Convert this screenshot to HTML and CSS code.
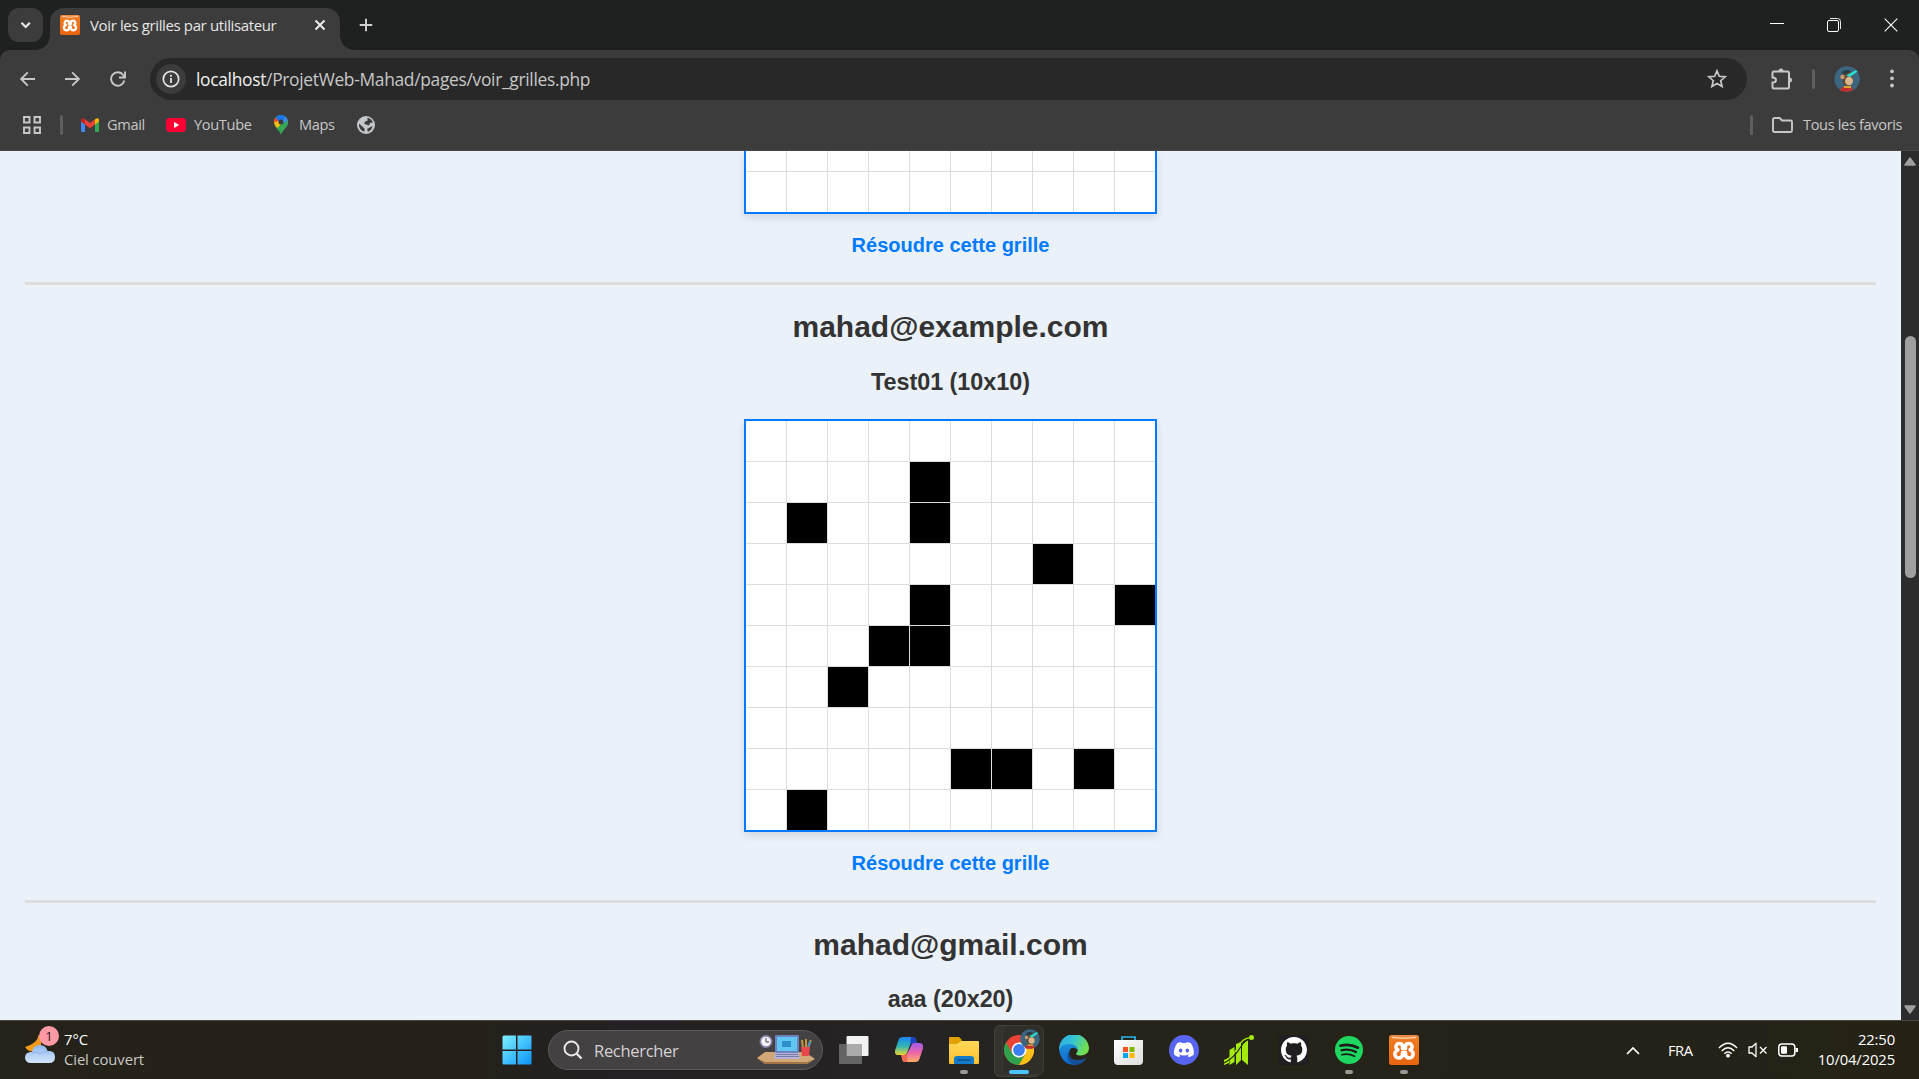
FILE: index.html
```html
<!DOCTYPE html>
<html lang="fr">
<head>
<meta charset="utf-8">
<title>Voir les grilles par utilisateur</title>
<link rel="stylesheet" href="styles.css">
</head>
<body>
<svg class="defs" width="0" height="0" aria-hidden="true">
  <defs>
    <linearGradient id="orange" x1="0" y1="0" x2="0" y2="1"><stop offset="0" stop-color="#e88d4c"/><stop offset=".18" stop-color="#f07a1e"/><stop offset="1" stop-color="#e8640f"/></linearGradient>
    <linearGradient id="win" x1="0" y1="0" x2="1" y2="1"><stop offset="0" stop-color="#7df0ff"/><stop offset="1" stop-color="#0a93fb"/></linearGradient>
    <symbol id="xampp" viewBox="0 0 30 30">
      <rect width="30" height="30" rx="2.5" fill="url(#orange)"/>
      <path d="M3 2.2Q15 4.5 27 2.2" stroke="#f8c9a4" stroke-width="1.5" fill="none"/>
      <path d="M13.500 13.500v-2q0-3-3-3a3.200 3.200 0 0 0-2.500 5.500l1 .8-1.500 1a4 4 0 0 0 2 7.200q4 0 4-4v-1.500h3V19q0 4 4 4a4 4 0 0 0 2-7.200l-1.500-1 1-.8a3.200 3.200 0 0 0-2.500-5.500q-3 0-3 3v2z" fill="none" stroke="#fff" stroke-width="3.500" stroke-linejoin="round"/>
    </symbol>
    <symbol id="avatar" viewBox="0 0 26 26">
      <circle cx="13" cy="13" r="12.700" fill="#3c6680"/>
      <path d="M6 25q1-5 7-5t6 4q-3 2-7 1.700T6 25" fill="#c1302f"/>
      <path d="M8 9q4-6 10-3l1 9-5 6-5-3z" fill="#5d4733"/>
      <circle cx="8.500" cy="11" r="2.200" fill="#c89c70"/>
      <ellipse cx="15" cy="15" rx="4" ry="4.300" fill="#dcb58c"/>
      <path d="M7 7q4-5 10-2l-5 3z" fill="#263c46"/>
      <path d="M12 9.500l10-5.500 1.500 1.500L16 11z" fill="#28e0d0"/>
      <path d="M10 20h7v2h-7z" fill="#dfa32f"/>
    </symbol>
  </defs>
</svg>
<div class="screen">
  <header class="browser">
    <div class="tabstrip">
      <div class="tab-search"><svg width="35" height="34" viewBox="0 0 35 34"><path d="M13.500 14.800l4.200 4.200 4.200-4.200" fill="none" stroke="#e6e6e6" stroke-width="2.200"/></svg></div>
      <div class="tab">
        <svg width="20" height="20"><use href="#xampp"/></svg>
        <span class="tab-title">Voir les grilles par utilisateur</span>
        <svg class="tab-close" width="12" height="12" viewBox="0 0 12 12"><path d="M1.500 1.500l9 9M10.500 1.500l-9 9" stroke="#ececec" stroke-width="2"/></svg>
      </div>
      <svg class="new-tab" width="14" height="14" viewBox="0 0 14 14"><path d="M7 .7v12.600M.7 7h12.600" stroke="#d0d0d0" stroke-width="1.900"/></svg>
      <div class="window-controls">
        <svg width="14" height="14" viewBox="0 0 14 14"><path d="M0 5.500h14" stroke="#fff"/></svg>
        <svg width="14" height="14" viewBox="0 0 14 14"><path d="M3 .5h7.500a3 3 0 0 1 3 3V11" fill="none" stroke="#e8e8e8"/><rect x=".5" y="2.500" width="11" height="11" rx="1.500" fill="none" stroke="#fff"/></svg>
        <svg width="14" height="14" viewBox="0 0 14 14"><path d="M.7.7l12.600 12.600M13.300.7L.7 13.300" stroke="#fff" stroke-width="1.100"/></svg>
      </div>
    </div>
    <div class="toolbar">
      <svg width="16" height="16" viewBox="0 0 16 16"><path d="M15 8H1.500M7.800 1.300L1.100 8l6.700 6.700" fill="none" stroke="#c7c7c7" stroke-width="1.900"/></svg>
      <svg width="16" height="16" viewBox="0 0 16 16"><path d="M0 8H13.500M7.200 1.300L13.900 8l-6.700 6.700" fill="none" stroke="#c7c7c7" stroke-width="1.900"/></svg>
      <svg width="16" height="16" viewBox="0 0 16 16"><path d="M14.300 9.500A6.700 6.700 0 1 1 13.200 4L14.800 6M15 .5v6H9" fill="none" stroke="#c7c7c7" stroke-width="1.900"/></svg>
      <div class="omnibox">
        <span class="site-info"><svg width="18" height="18" viewBox="0 0 18 18"><circle cx="9" cy="9" r="7.700" fill="none" stroke="#e3e3e3" stroke-width="1.700"/><path d="M9 8v5M9 4.800v1.900" stroke="#e3e3e3" stroke-width="1.800"/></svg></span>
        <span class="url"><b>localhost</b>/ProjetWeb-Mahad/pages/voir_grilles.php</span>
        <svg class="star" width="20" height="20" viewBox="0 0 20 20"><path d="M10 1.800l2.300 5.500 5.900.5-4.500 3.900 1.400 5.800-5.100-3.100-5.100 3.100 1.400-5.800-4.500-3.900 5.900-.5z" fill="none" stroke="#c7c7c7" stroke-width="1.700"/></svg>
      </div>
      <svg class="puzzle" width="22" height="22" viewBox="0 0 22 22"><path d="M3 3.500h13.500q1.500 0 1.500 1.500v14q0 1.500-1.500 1.500H3q-1.500 0-1.500-1.500v-4.500q3.500 0 3.500-2.500T1.500 9.500V5Q1.500 3.500 3 3.500z" fill="none" stroke="#c7c7c7" stroke-width="2"/><path d="M7.500 3a2.500 2.500 0 0 1 5 0zM18.500 9.500a2.500 2.500 0 0 1 0 5z" fill="#c7c7c7"/></svg>
      <i class="divider toolbar-divider"></i>
      <svg class="profile" width="26" height="26"><use href="#avatar"/></svg>
      <svg class="menu" width="4" height="20" viewBox="0 0 4 20"><g fill="#c7c7c7"><circle cx="2" cy="2.300" r="1.900"/><circle cx="2" cy="9.300" r="1.900"/><circle cx="2" cy="16.500" r="1.900"/></g></svg>
    </div>
    <div class="bookmarks">
      <svg width="18" height="18" viewBox="0 0 18 18"><path d="M1 1h5.500v5.500H1zM11.500 1H17v5.500h-5.500zM1 11.500h5.500V17H1zM11.500 11.500H17V17h-5.500z" fill="none" stroke="#c7c7c7" stroke-width="1.900"/></svg>
      <i class="divider apps-divider"></i>
      <svg class="bm-gmail" width="18" height="14" viewBox="0 0 18 14"><path d="M0 3l4 3v8H1.200Q0 14 0 12.800z" fill="#4285f4"/><path d="M18 3l-4 3v8h2.800q1.200 0 1.200-1.200z" fill="#34a853"/><path d="M14 1.300Q18-1.500 18 2.500v1L14 6.500z" fill="#fbbc04"/><path d="M4 1.300l5 3.800 5-3.800v5.200l-5 3.800-5-3.800z" fill="#ea4335"/><path d="M4 1.300Q0-1.500 0 2.500v1l4 3z" fill="#c5221f"/></svg>
      <span class="bm-label bm-label-gmail">Gmail</span>
      <svg class="bm-youtube" width="20" height="14" viewBox="0 0 20 14"><rect width="20" height="14" rx="3.500" fill="#ff0033"/><path d="M8 4l5.200 3L8 10z" fill="#fff"/></svg>
      <span class="bm-label bm-label-youtube">YouTube</span>
      <svg class="bm-maps" width="14" height="20" viewBox="0 0 14 20"><path d="M7 20C6.300 15.500 0 13 0 7a7 7 0 0 1 14 0c0 6-6.300 8.500-7 13z" fill="#34a853"/><path d="M3 12.500Q0 9.500 0 7q0-2.500 1.700-4.500L7 7z" fill="#fbbc04"/><path d="M1.700 2.500L5.500 5.800 3.500 9 .3 8.500Q-.5 5 1.700 2.500z" fill="#ea4335"/><path d="M1.700 2.500Q4-.5 7 0q3 0 4.800 2L6 8z" fill="#1a73e8"/><path d="M11.800 2Q14 4 14 7q0 1.500-.7 3L7 7z" fill="#4285f4"/><path d="M13.800 5q.8 4-2.800 7.500L7 17l-3-3.500z" fill="#34a853"/><path d="M.2 7q.5 3.500 3.300 6L7 9 4 6z" fill="#fbbc04"/><circle cx="7" cy="7" r="2.500" fill="#3c3c3c"/></svg>
      <span class="bm-label bm-label-maps">Maps</span>
      <svg class="bm-globe" width="18" height="18" viewBox="0 0 18 18"><circle cx="9" cy="9" r="9" fill="#c4c7cb"/><path d="M2 7.500l5.500 5v3.200A7.200 7.200 0 0 1 2 7.500zM10.500 1.800q4.300 1 5.500 5.200-1.500-1-3 0L12 9.500 9 8.500l-2-1 1.500-2.300 2-.5z" fill="#3c3c3c"/><path d="M10 13l5.500-3q-.5 4-4.500 5.800z" fill="#3c3c3c"/></svg>
      <i class="divider all-divider"></i>
      <svg class="folder" width="21" height="16" viewBox="0 0 21 16"><path d="M2.500 1h5.200l2.300 2.500h8.500Q20 3.500 20 5v8.500q0 1.500-1.500 1.500h-16Q1 15 1 13.500v-11Q1 1 2.500 1z" fill="none" stroke="#c7c7c7" stroke-width="1.900"/></svg>
      <span class="bm-label bm-label-all">Tous les favoris</span>
    </div>
  </header>

  <div class="viewport">
    <main class="page">
      <div class="grille grille-end" data-rows="2" data-black=""></div>
      <a class="solve">Résoudre cette grille</a>
      <div class="rule"></div>
      <h2>mahad@example.com</h2>
      <h3>Test01 (10x10)</h3>
      <div class="grille" data-rows="10" data-black="14 21 24 37 44 49 53 54 62 85 86 88 91"></div>
      <a class="solve">Résoudre cette grille</a>
      <div class="rule"></div>
      <h2>mahad@gmail.com</h2>
      <h3>aaa (20x20)</h3>
    </main>
    <aside class="scrollbar">
      <svg width="12" height="9" viewBox="0 0 12 9"><path d="M6 1l5 7H1z" fill="#9f9f9f" stroke="#9f9f9f" stroke-linejoin="round" stroke-width="1.500"/></svg>
      <div class="thumb"></div>
      <svg class="arrow-down" width="12" height="9" viewBox="0 0 12 9"><path d="M6 8l5-7H1z" fill="#9f9f9f" stroke="#9f9f9f" stroke-linejoin="round" stroke-width="1.500"/></svg>
    </aside>
  </div>

  <footer class="taskbar">
    <div class="weather">
      <svg width="36" height="36" viewBox="0 0 36 36">
        <defs><linearGradient id="cloud" x1="0" y1="0" x2="0" y2="1"><stop offset="0" stop-color="#8fb8f0"/><stop offset="1" stop-color="#d4e4fb"/></linearGradient></defs>
        <path d="M13 6q1 7-13 12 4 6 11 4l5-5V8z" fill="#f39a1d"/>
        <path d="M5.500 34a5.500 5.500 0 0 1 0-11h1.500q1-7 8-7 6 0 7.500 6 7.500-1 7.500 6 0 6-6 6z" fill="url(#cloud)"/>
        <path d="M7 24q5-2 8 1 5-4 9-1" fill="none" stroke="#8db1e8" stroke-width="1"/>
      </svg>
      <span class="badge">1</span>
      <div class="weather-text"><span class="temp">7°C</span><span class="sky">Ciel couvert</span></div>
    </div>
    <div class="dock">
      <svg width="30" height="30" viewBox="0 0 30 30"><path d="M1.500.5H14v14H.5v-13zM15.500.5h13q1 0 1 1v13h-14zM.5 16H14v13.500H1.500q-1 0-1-1zM15.500 16h14v12.500q0 1-1 1h-13z" fill="url(#win)"/></svg>
      <div class="search">
        <svg width="20" height="20" viewBox="0 0 20 20"><circle cx="8.500" cy="8.500" r="7" fill="none" stroke="#e9e9ea" stroke-width="1.900"/><path d="M13.500 13.500l5 5" stroke="#e9e9ea" stroke-width="2.400"/></svg>
        <span>Rechercher</span>
        <svg class="desk" width="58" height="30" viewBox="0 0 58 30">
          <path d="M8 17h40l10 7-8 5H8l-8-6z" fill="#d3a877"/><path d="M0 23l8 4h42l8-3-8 5H8z" fill="#9f7447"/>
          <circle cx="9" cy="6.500" r="6.500" fill="#8580a6"/><circle cx="9" cy="6.500" r="4.800" fill="#f4f2fb"/><path d="M9 3v4h3" stroke="#444" fill="none"/>
          <rect x="18" y="0" width="24" height="18" rx="1" fill="#6d83bd"/><rect x="20" y="2" width="20" height="14" fill="#62c6f2"/><rect x="25" y="6" width="9" height="6" fill="#2f8fcd"/>
          <path d="M18 18h24l1 6H17z" fill="#b5b3d6"/><path d="M19 19.500h22M19 21.500h23" stroke="#7c7aa7"/>
          <path d="M46 13l-1-8M49 13V4M51 13l3-8" stroke-width="2" stroke="#c59738"/><path d="M53 6l-2 7" stroke="#4391ca" stroke-width="2"/><path d="M44 12h9l-1 9h-7z" fill="#e8474c"/>
        </svg>
      </div>
      <div class="apps">
        <div class="app"><svg width="30" height="30" viewBox="0 0 30 30"><rect x="7.500" y="1" width="22" height="20" rx="1" fill="#f2f2f2"/><rect x="0" y="9" width="23" height="20" rx="1" fill="#777" fill-opacity=".78"/><path d="M8 9h15v12H8z" fill="#aaa"/></svg></div>
        <div class="app"><svg width="30" height="30" viewBox="0 0 30 30">
          <defs><linearGradient id="cp1" x1="0" y1="0" x2="0" y2="1"><stop offset="0" stop-color="#1987ef"/><stop offset=".5" stop-color="#2fb3b5"/><stop offset="1" stop-color="#e8d62f"/></linearGradient><linearGradient id="cp2" x1="0" y1="0" x2="0" y2="1"><stop offset="0" stop-color="#a259e8"/><stop offset=".5" stop-color="#eb64ac"/><stop offset="1" stop-color="#ffae62"/></linearGradient></defs>
          <path d="M9 2h10q2 0 2.700 2l1 4h-4q-2 0-2.700 2L13 18q-.8 2-3 2H4q-4 0-2.800-5L4.500 5Q5.500 2 9 2z" fill="url(#cp1)"/>
          <path d="M17 2h2q2 0 2.700 2l1 4h-4q-2 0-2.700 2z" fill="#2340c4"/>
          <path d="M21 27H11q-2 0-2.700-2l-1-5h3.500q2 0 2.700-2L17 11q.8-3 3-3h6q4 0 2.800 6l-3.300 10Q24.500 27 21 27z" fill="url(#cp2)"/>
          <path d="M13 27h-2q-2 0-2.700-2l-1-5h3.500q2 0 2.700-2z" fill="#ef6555"/></svg></div>
        <div class="app"><svg width="30" height="30" viewBox="0 0 30 30"><defs><linearGradient id="fd" x1="0" y1="0" x2="0" y2="1"><stop offset="0" stop-color="#ffd95a"/><stop offset="1" stop-color="#fcbf2c"/></linearGradient></defs><path d="M0 3q0-1 1-1h9l3 3-3 4H0z" fill="#e0a100"/><path d="M0 9h8l4-3h17q1 0 1 1v21q0 1-1 1H1q-1 0-1-1z" fill="url(#fd)"/><path d="M5 29v-5q0-3 3-3h14q3 0 3 3v5z" fill="#1379c9"/><path d="M8.500 25h13" stroke="#0b4d87" stroke-width="1.300"/></svg><i class="running"></i></div>
        <div class="app active"><i class="stack"></i>
          <svg width="30" height="30" viewBox="0 0 30 30"><circle cx="15" cy="15" r="15" fill="#ea4335"/><path d="M2 7.500A15 15 0 0 0 15 30l6.500-11.200L15 15 8.500 18.700z" fill="#2fa04c"/><path d="M15 30A15 15 0 0 0 28 7.500H15l6.500 11.300z" fill="#fbc116"/><circle cx="15" cy="15" r="7.500" fill="#fff"/><circle cx="15" cy="15" r="5.900" fill="#3c7df0"/></svg>
          <svg class="chrome-profile" width="20" height="20"><use href="#avatar"/></svg><i class="running current"></i></div>
        <div class="app"><svg width="30" height="30" viewBox="0 0 30 30"><defs><linearGradient id="ed1" x1="0" y1="0" x2="1" y2=".4"><stop offset="0" stop-color="#2ba6e4"/><stop offset=".5" stop-color="#35c4d6"/><stop offset="1" stop-color="#72e052"/></linearGradient><linearGradient id="ed2" x1="0" y1="0" x2="0" y2="1"><stop offset="0" stop-color="#1b90d8"/><stop offset="1" stop-color="#0c66cf"/></linearGradient></defs>
          <path d="M0 15A15 15 0 0 1 30 13q0 7-8 7.500-5 0-5-2 2-1 1.500-4Q17 10 11 10 4 10 0 15z" fill="url(#ed1)"/><path d="M0 15Q3 8.500 11 9q7 .5 7.500 5.500Q12 10 10 17t8 13Q3 31 0 15z" fill="url(#ed2)"/><path d="M10.500 16q-1.500 9 8 9 5 0 9-2-4 7-12 7-7-3-7-8 0-4 2-6z" fill="#164f97"/></svg></div>
        <div class="app"><svg width="30" height="30" viewBox="0 0 30 30"><defs><linearGradient id="st" x1="0" y1="0" x2="1" y2="1"><stop offset="0" stop-color="#fff"/><stop offset="1" stop-color="#dcdcdc"/></linearGradient></defs><path d="M8 6V2h13v4" fill="none" stroke="#29b3f0" stroke-width="1.700"/><path d="M0 5h29v21q0 4-4 4H4q-4 0-4-4z" fill="url(#st)"/><path d="M9 12h5v5H9z" fill="#f25022"/><path d="M15.500 12h5v5h-5z" fill="#7fba00"/><path d="M9 18h5v5H9z" fill="#00a4ef"/><path d="M15.500 18h5v5h-5z" fill="#ffb900"/></svg></div>
        <div class="app"><svg width="30" height="30" viewBox="0 0 30 30"><circle cx="15" cy="15" r="15" fill="#5865f2"/><path transform="translate(5 4.700) scale(.83)" fill="#fff" d="M20.317 4.370a19.790 19.790 0 00-4.885-1.515.074.074 0 00-.079.037c-.211.375-.445.865-.608 1.250-1.845-.276-3.680-.276-5.487 0-.164-.393-.406-.874-.618-1.250a.077.077 0 00-.078-.037 19.736 19.736 0 00-4.885 1.515C.533 9.046-.319 13.580.099 18.058c2.084 1.564 4.072 2.479 6.024 3.085.546-.658.957-1.323 1.310-2.022-.694-.353-1.316-.655-1.914-.998l.364-.419c4.005 1.783 8.258 1.783 12.139 0l.451.302c-.598.470-1.222.770-1.880 1.019.32.804.731 1.469 1.184 2.099 2.045-.578 4.034-1.493 6.087-3.001.532-5.232-.807-9.729-3.517-13.715zM8.020 15.331c-1.183 0-2.157-1.086-2.157-2.419s.956-2.419 2.157-2.419 2.176 1.095 2.157 2.419c0 1.333-.956 2.419-2.157 2.419zm7.975 0c-1.183 0-2.157-1.086-2.157-2.419s.955-2.419 2.157-2.419 2.176 1.095 2.157 2.419c0 1.333-.946 2.419-2.157 2.419z"/></svg></div>
        <div class="app"><svg width="30" height="30" viewBox="0 0 30 30"><path d="M0 25l5-2v5l-5 2zM5.500 15l5-3v15l-5 3zM12 9l5-2v18l-5 5zM18 9l6-4v25l-6-5z" fill="#a4ea0b"/><path d="M0 28Q10 23 16 13T29 3" fill="none" stroke="#25241a" stroke-width="1.200"/><path d="M0 26Q9 22 14 12T28 3" fill="none" stroke="#a4ea0b" stroke-width="1.300"/><circle cx="27.500" cy="2.500" r="2.500" fill="#a4ea0b"/></svg></div>
        <div class="app"><svg width="30" height="30" viewBox="0 0 30 30"><path fill="#201e20" d="M0 0h30v30H0z"/><path transform="translate(2 2) scale(1.625)" fill="#fff" d="M8 0C3.580 0 0 3.580 0 8c0 3.540 2.290 6.530 5.470 7.590.4.070.55-.170.55-.380 0-.190-.010-.820-.010-1.490-2.010.370-2.530-.490-2.690-.940-.090-.230-.480-.940-.820-1.130-.280-.150-.680-.520-.010-.530.630-.010 1.080.580 1.230.820.720 1.210 1.870.870 2.330.660.070-.520.280-.870.510-1.070-1.780-.200-3.640-.890-3.640-3.950 0-.870.310-1.590.820-2.150-.080-.200-.360-1.020.080-2.120 0 0 .670-.210 2.200.820.640-.180 1.320-.270 2-.270s1.360.090 2 .270c1.530-1.040 2.200-.820 2.200-.820.440 1.100.160 1.920.080 2.120.510.560.820 1.270.820 2.150 0 3.070-1.870 3.750-3.650 3.950.290.250.540.730.540 1.480 0 1.070-.010 1.930-.010 2.200 0 .210.150.460.550.380A8.010 8.010 0 0 0 16 8c0-4.420-3.580-8-8-8z"/></svg></div>
        <div class="app"><svg width="30" height="30" viewBox="0 0 30 30"><circle cx="15" cy="15" r="14" fill="#1ed760"/><path d="M6.500 10.700q9-2.500 17.500 2" fill="none" stroke="#1c1b19" stroke-width="2.700" stroke-linecap="round"/><path d="M7.500 15.300q8-2 14.500 1.700" fill="none" stroke="#1c1b19" stroke-width="2.200" stroke-linecap="round"/><path d="M8 19.700q7-1.600 12.500 1.600" fill="none" stroke="#1c1b19" stroke-width="1.800" stroke-linecap="round"/></svg><i class="running"></i></div>
        <div class="app"><svg width="30" height="30"><use href="#xampp"/></svg><i class="running"></i></div>
      </div>
    </div>
    <div class="tray">
      <svg class="chevron" width="14" height="9" viewBox="0 0 14 9"><path d="M1 8l6-6 6 6" fill="none" stroke="#fff" stroke-width="1.700"/></svg>
      <span class="lang">FRA</span>
      <svg class="wifi" width="20" height="16" viewBox="0 0 20 16"><path d="M1 6q9-9.500 18 0M3.700 9q6.300-6.500 12.600 0M6.400 11.800q3.600-3.500 7.200 0" fill="none" stroke="#fff" stroke-width="1.500"/><circle cx="10" cy="13.700" r="1.900" fill="#fff"/></svg>
      <svg class="mute" width="20" height="16" viewBox="0 0 20 16"><path d="M1 5h3l4-3.700v13.400L4 11H1z" fill="none" stroke="#fff" stroke-width="1.300" stroke-linejoin="round"/><path d="M12 5l6.500 6.500M18.500 5L12 11.500" stroke="#fff" stroke-width="1.300"/></svg>
      <svg class="battery" width="20" height="14" viewBox="0 0 20 14"><rect x=".8" y="1" width="16" height="12" rx="3" fill="none" stroke="#fff" stroke-width="1.500"/><rect x="3" y="3.200" width="6" height="7.600" rx="1" fill="#fff"/><path d="M17.500 5H20v4h-2.500z" fill="#fff"/></svg>
      <div class="clock"><span class="time">22:50</span><span class="date">10/04/2025</span></div>
    </div>
  </footer>
</div>
<script src="script.js"></script>
</body>
</html>
```
FILE: styles.css
```css
* { box-sizing: border-box; }
body { margin: 0; overflow: hidden; font-family: "Open Sans", "Noto Sans", sans-serif; }
svg { display: block; flex: none; }
.defs { position: absolute; }
.screen { width: 1919px; height: 1079px; display: flex; flex-direction: column; }

/* Browser chrome */
.browser { height: 151px; background: #1f2120; flex: none; }
.tabstrip { height: 50px; display: flex; padding: 8px 0 0 8px; }
.tab-search { width: 35px; height: 34px; border-radius: 11px; background: #3c3c3c; }
.tab { position: relative; width: 290px; height: 42px; margin-left: 7px; padding: 0 14px 8px 10px; display: flex; align-items: center; border-radius: 14px 14px 0 0; background: #3c3c3c; }
.tab::before, .tab::after { content: ""; position: absolute; bottom: 0; width: 14px; height: 14px; }
.tab::before { left: -14px; background: radial-gradient(circle at 0 0, transparent 13.5px, #3c3c3c 14px); }
.tab::after { right: -14px; background: radial-gradient(circle at 100% 0, transparent 13.5px, #3c3c3c 14px); }
.tab-title { margin-left: 10px; font-size: 15px; line-height: 20px; color: #e6e6e6; letter-spacing: -0.37px; white-space: nowrap; }
.tab-close { margin-left: auto; }
.new-tab { margin: 10px 0 0 19px; }
.window-controls { margin: 10px 21px 0 auto; display: flex; gap: 43px; }
.toolbar { height: 58px; padding: 0 25px 0 20px; display: flex; align-items: center; background: #3c3c3c; border-radius: 10px 10px 0 0; }
.toolbar > svg + svg { margin-left: 29px; }
.omnibox { width: 1597px; height: 42px; margin-left: 24px; padding: 0 20px 0 6px; display: flex; align-items: center; border-radius: 21px; background: #282828; }
.site-info { width: 30px; height: 30px; display: flex; align-items: center; justify-content: center; border-radius: 50%; background: #3c3c3c; }
.url { margin-left: 10px; font-size: 17.4px; line-height: 24px; color: #c7c7c7; letter-spacing: -0.31px; }
.url b { font-weight: 400; color: #f0f0f0; }
.star { margin-left: auto; }
.puzzle { margin-left: 24px; }
.divider { width: 3px; height: 20px; border-radius: 2px; background: #5e5e5e; }
.toolbar-divider { margin-left: 19px; }
.toolbar > .profile { margin-left: 19px; }
.toolbar > .menu { margin-left: 30px; }
.bookmarks { height: 43px; padding: 0 17px 9px 23px; display: flex; align-items: center; background: #3c3c3c; border-bottom: 1px solid #474545; }
.bm-label { margin-bottom: 2px; font-size: 14.6px; line-height: 20px; color: #c7c7c7; letter-spacing: -0.35px; white-space: nowrap; }
.apps-divider { margin-left: 19px; }
.bm-gmail { margin-left: 18px; }
.bm-label-gmail { width: 59px; margin-left: 8px; }
.bm-label-youtube { width: 80px; margin-left: 8px; }
.bm-label-maps { width: 47px; margin-left: 11px; }
.bm-globe { margin-left: 11px; }
.all-divider { margin-left: auto; }
.folder { margin-left: 19px; }
.bm-label-all { width: 99px; margin-left: 10px; }

/* Page content */
.viewport { height: 869px; flex: none; display: flex; background: #eaf1f8; overflow: hidden; }
.page { width: 1901px; padding: 0 25px; display: flex; flex-direction: column; align-items: center; font-family: Arial, "Liberation Sans", sans-serif; font-weight: 700; color: #333; }
.page > * { flex: none; }
.grille { width: 413px; display: grid; grid-template-columns: repeat(10, 40px); grid-auto-rows: 40px; gap: 1px; background: #ddd; border: 2px solid #007bff; box-shadow: 0 4px 8px rgba(0, 0, 0, .1); }
.grille-end { border-top: 0; grid-template-rows: 20px; }
.cell { background: #fff; }
.cell.black { background: #000; }
.solve { margin: 20px 0 25px; height: 23px; font-size: 20px; line-height: 23px; color: #007bff; }
.rule { width: 1851px; height: 3px; background: #ddd; }
h2 { margin: 25px 0 0; height: 34px; font-size: 30px; line-height: 34px; }
h3 { margin: 25px 0; height: 25px; font-size: 23.4px; line-height: 26px; letter-spacing: -.05px; }
h3:last-child { margin-top: 24px; }
.scrollbar { width: 18px; padding: 6px 3px; display: flex; flex-direction: column; align-items: center; background: #2c2c2c; }
.thumb { width: 11px; height: 242px; margin-top: 170px; border-radius: 6px; background: #9f9f9f; }
.arrow-down { margin-top: auto; }

/* Taskbar */
.taskbar { height: 59px; flex: none; display: flex; align-items: center; border-top: 1px solid #48473e; background: linear-gradient(90deg, #25221a, #252119 24%, #242023 32%, #252324 48%, #262418 58%, #262318 68%, #242119 80%, #27250f 130%); }
.weather { position: relative; width: 502px; padding-left: 25px; display: flex; align-items: center; }
.weather > svg { margin-top: -7px; }
.badge { position: absolute; left: 39px; top: -3px; width: 20px; height: 20px; border-radius: 50%; background: #ff99a4; color: #1c1717; font-size: 13px; line-height: 20px; text-align: center; }
.weather-text, .clock { margin-bottom: 2px; display: flex; flex-direction: column; font-size: 14.8px; line-height: 20px; }
.weather-text { margin-left: 3px; color: #fff; letter-spacing: -.08px; }
.sky { color: #c9c8c5; }
.dock { display: flex; align-items: center; }
.search { width: 275px; height: 40px; margin-left: 16px; padding: 0 7px 0 14px; display: flex; align-items: center; border: 1px solid #5c595a; border-radius: 20px; background: #444143; }
.search span { margin-left: 11px; font-size: 16.5px; color: #d4d2d3; letter-spacing: -.3px; }
.desk { margin-left: auto; }
.apps { margin-left: 3px; display: flex; }
.app { position: relative; width: 55px; height: 50px; display: flex; align-items: center; justify-content: center; }
.app svg { position: relative; }
.running { position: absolute; left: 24px; bottom: 1px; width: 8px; height: 4px; border-radius: 2px; background: #999793; }
.running.current { left: 18px; width: 20px; background: #4cc2ff; }
.active::before { content: ""; position: absolute; left: 3px; top: 0; width: 45px; height: 50px; border-radius: 6px; background: #35332e; border: 1px solid #44423c; }
.stack { position: absolute; left: 11px; top: 0; width: 42px; height: 50px; border-radius: 6px; background: #302e29; border: 1px solid #3c3a34; }
.app .chrome-profile { position: absolute; left: 29px; top: 4px; }
.tray { margin-left: auto; padding-right: 24px; display: flex; align-items: center; color: #fff; }
.lang { width: 26px; margin-left: 28px; font-size: 14.7px; letter-spacing: -.5px; }
.wifi { margin-left: 24px; }
.mute { margin-left: 10px; }
.battery { margin-left: 10px; }
.clock { width: 97px; align-items: flex-end; letter-spacing: -.13px; white-space: nowrap; }
```
FILE: script.js
```js
// Fill each grid; data-black lists cell indices, counted row by row.
document.querySelectorAll(".grille").forEach((grille) => {
  const black = grille.dataset.black.split(" ").filter(Boolean).map(Number);
  for (let i = 0; i < grille.dataset.rows * 10; i++) {
    const cell = document.createElement("div");
    cell.className = black.includes(i) ? "cell black" : "cell";
    grille.appendChild(cell);
  }
});
```
